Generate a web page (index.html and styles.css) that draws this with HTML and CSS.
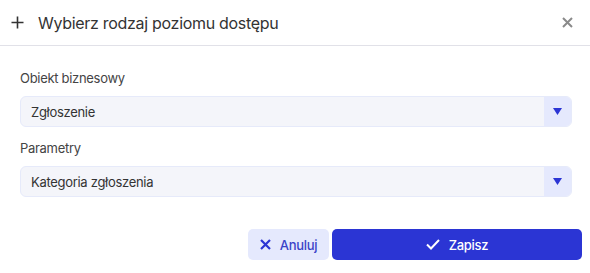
FILE: index.html
```html
<!DOCTYPE html>
<html lang="pl">
<head>
    <meta charset="UTF-8">
    <meta name="viewport" content="width=device-width, initial-scale=1.0">
    <title>Wybierz rodzaj poziomu dostępu</title>
    <link rel="stylesheet" href="styles.css">
</head>
<body>
    <div class="dialog">
        <!-- Nagłówek okna -->
        <div class="dialog-header">
            <svg class="icon-plus" width="13" height="13" viewBox="0 0 13 13">
                <path d="M6.5 0.5v12M0.5 6.5h12" stroke="#333" stroke-width="1.6" fill="none"/>
            </svg>
            <h1 class="dialog-title">Wybierz rodzaj poziomu dostępu</h1>
            <button class="close-btn" type="button" aria-label="Zamknij">
                <svg width="11" height="11" viewBox="0 0 11 11">
                    <path d="M1 1l9 9M10 1l-9 9" stroke="#8a8a8a" stroke-width="2" fill="none"/>
                </svg>
            </button>
        </div>

        <!-- Pola formularza -->
        <div class="dialog-body">
            <div class="field">
                <label class="field-label">Obiekt biznesowy</label>
                <div class="select">
                    <span class="select-value">Zgłoszenie</span>
                    <span class="select-arrow">
                        <svg width="9" height="7" viewBox="0 0 9 7"><path d="M0 0h9L4.5 7z" fill="#2b35d4"/></svg>
                    </span>
                </div>
            </div>
            <div class="field">
                <label class="field-label">Parametry</label>
                <div class="select">
                    <span class="select-value">Kategoria zgłoszenia</span>
                    <span class="select-arrow">
                        <svg width="9" height="7" viewBox="0 0 9 7"><path d="M0 0h9L4.5 7z" fill="#2b35d4"/></svg>
                    </span>
                </div>
            </div>
        </div>

        <!-- Przyciski -->
        <div class="dialog-footer">
            <button class="btn btn-cancel" type="button">
                <svg width="11" height="11" viewBox="0 0 11 11">
                    <path d="M1 1l9 9M10 1l-9 9" stroke="#2b35d4" stroke-width="2.2" fill="none"/>
                </svg>
                Anuluj
            </button>
            <button class="btn btn-save" type="button">
                <svg width="14" height="11" viewBox="0 0 14 11">
                    <path d="M1 5.5l4 4L13 1" stroke="#fff" stroke-width="2" fill="none"/>
                </svg>
                Zapisz
            </button>
        </div>
    </div>
</body>
</html>
```

FILE: styles.css
```css
body {
    margin: 0;
    font-family: Inter, 'Noto Sans', sans-serif;
    color: #333;
    background-color: #fff;
    letter-spacing: -0.3px;
}

.dialog {
    width: 590px;
}

/* Nagłówek */
.dialog-header {
    display: flex;
    align-items: center;
    height: 45px;
    padding: 0 12px 0 11px;
    border-bottom: 1px solid #e1e1e8;
}

.icon-plus {
    margin-right: 14px;
}

.dialog-title {
    flex: 1;
    margin: 0;
    font-size: 16px;
    font-weight: 400;
    color: #333;
}

.close-btn {
    display: flex;
    background: none;
    border: none;
    padding: 0;
    margin-right: 5px;
    cursor: pointer;
}

/* Formularz */
.dialog-body {
    padding: 22px 18px 0 20px;
    display: flex;
    flex-direction: column;
    gap: 11px;
}

.field-label {
    display: block;
    font-size: 13px;
    line-height: 20px;
    color: #444;
    margin-bottom: 8px;
}

.select {
    display: flex;
    height: 29px;
    border: 1px solid #e6eafa;
    border-radius: 6px;
    background-color: #f4f5fa;
    overflow: hidden;
}

.select-value {
    flex: 1;
    display: flex;
    align-items: center;
    padding-left: 10px;
    font-size: 13px;
    color: #333;
}

.select-arrow {
    width: 27px;
    display: flex;
    align-items: center;
    justify-content: center;
    background-color: #e5e9fd;
}

/* Przyciski */
.dialog-footer {
    display: flex;
    justify-content: flex-end;
    gap: 3px;
    padding: 32px 8px 0 0;
}

.btn {
    display: flex;
    align-items: center;
    justify-content: center;
    gap: 9px;
    height: 31px;
    border: none;
    border-radius: 5px;
    font-family: inherit;
    font-size: 13px;
    font-weight: 500;
    letter-spacing: -0.3px;
    cursor: pointer;
}

.btn-cancel {
    width: 81px;
    background-color: #e5e9fd;
    color: #3a42c8;
}

.btn-save {
    width: 250px;
    background-color: #2b35d4;
    color: #fff;
}
```
